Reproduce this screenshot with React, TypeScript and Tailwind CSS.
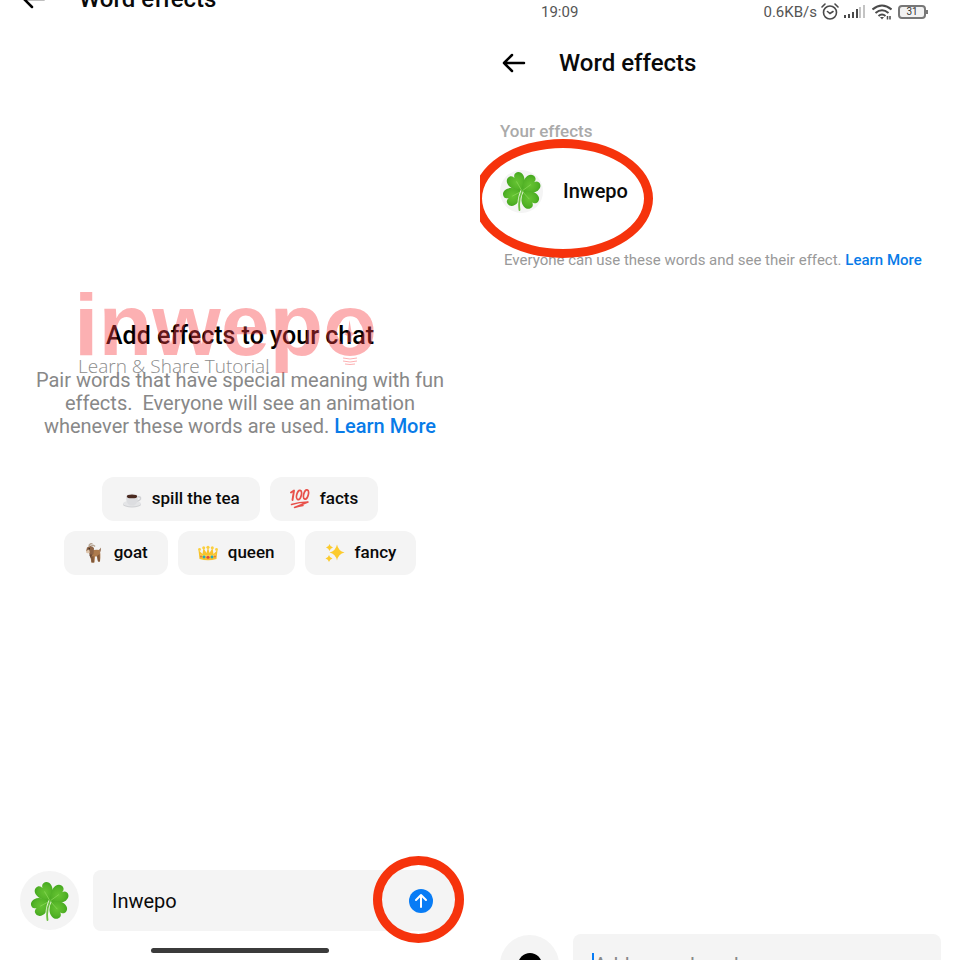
import React from 'react';
import { twJoin } from 'tailwind-merge';

const heart = 'M20 20C16.500 17 11 12.500 11 7C11 3 13.800 .8 16.800 1.300C18.700 1.600 19.800 3.500 20 5C20.200 3.500 21.300 1.600 23.200 1.300C26.200 .8 29 3 29 7C29 12.500 23.500 17 20 20Z';

const Clover = ({ className }: { className: string }) => (
  <svg viewBox="0 0 40 40" className={className} aria-hidden="true">
    <defs>
      <radialGradient id="leaf" cx="50%" cy="45%" r="60%">
        <stop offset="0" stopColor="#66c433" />
        <stop offset="0.600" stopColor="#55b428" />
        <stop offset="1" stopColor="#3fa51c" />
      </radialGradient>
    </defs>
    {[-30, 54, 138, 242].map((angle) => (
      <g key={angle} transform={`rotate(${angle} 20 20)`}>
        <path d={heart} fill="url(#leaf)" />
        <path d="M20 19V9" stroke="#84d452" strokeWidth="0.800" />
      </g>
    ))}
    <path d="M20 20Q16 29 17.500 39" fill="none" stroke="#edf8e6" strokeWidth="3.200" />
    <path d="M20 20Q16 29 17.500 39" fill="none" stroke="#6cbf40" strokeWidth="1.800" strokeLinecap="round" />
  </svg>
);

const Tea = () => (
  <svg viewBox="0 0 20 20" className="size-5" aria-hidden="true">
    <ellipse cx="10" cy="15.500" rx="9" ry="3" fill="#cfd0d3" />
    <ellipse cx="10" cy="14.500" rx="9" ry="3" fill="#e4e5e7" />
    <path d="M15 8Q19 7 18.500 10Q17.500 12 13 12.500" fill="none" stroke="#d0d1d4" strokeWidth="1.500" />
    <path d="M4 7Q4 15 8 16.500H12Q16 15 16 7Z" fill="#dcdde0" />
    <ellipse cx="10" cy="7" rx="6" ry="2.500" fill="#ececee" />
    <ellipse cx="10" cy="7.400" rx="5.200" ry="1.900" fill="#4a2a20" />
  </svg>
);

const Hundred = () => (
  <svg viewBox="0 0 20 20" className="size-5" fill="none" stroke="#e8504a" strokeLinecap="round" strokeLinejoin="round" aria-hidden="true">
    <path d="M1 3.500L4 1.500L2.500 11" strokeWidth="1.900" />
    <ellipse cx="9" cy="6" rx="2.300" ry="4.700" transform="rotate(14 9 6)" strokeWidth="1.700" />
    <ellipse cx="16" cy="5.500" rx="2.300" ry="4.700" transform="rotate(14 16 5.500)" strokeWidth="1.700" />
    <path d="M1.500 15.500Q9 13 18 13L4.500 18.500Q9 17 13 16.500" strokeWidth="1.500" />
  </svg>
);

const Goat = () => (
  <svg viewBox="0 0 20 20" className="size-5" aria-hidden="true">
    <path d="M7 8Q11 6 15.500 7Q17 10 16 18.500H14L13 13.500H11L10.500 19.500H7.500L6 12Z" fill="#ad7b4d" />
    <path d="M13 13L14 18.500H16L15.500 11ZM7 14L7.500 19.500H10L9.500 13Z" fill="#80583a" />
    <path d="M3 4.500L7 2.500L10 5L9.500 11L7 13.500L5 10L2 8.500Z" fill="#8d6345" />
    <path d="M2 8L5 6.500L6 9.500L4 10.500L2 9.500Z" fill="#ddc5ad" />
    <path d="M5 11.500L8 11.500L7 15.500Z" fill="#654633" />
    <path d="M5 3.500Q5 .5 8.500 .5M7 3.500Q9 1 11 3.500" fill="none" stroke="#b7a695" strokeWidth="1.500" />
    <circle cx="5.200" cy="5.800" r=".7" fill="#292019" />
    <path d="M15 7L17 4.500L16.500 9Z" fill="#8d6345" />
  </svg>
);

const Crown = () => (
  <svg viewBox="0 0 20 20" className="size-5" aria-hidden="true">
    <path d="M1.500 16L.5 7L4.500 11L5.500 5L8.500 10L10 4L11.500 10L14.500 5L15.500 11L19.500 7L18.500 16Q10 18.500 1.500 16Z" fill="#f7c22c" />
    <path d="M2 12Q10 14 18 12" stroke="#ffdc55" fill="none" />
    <g fill="#fbcf3d">
      <circle cx="1.500" cy="6.500" r="1.400" />
      <circle cx="5.700" cy="4.800" r="1.500" />
      <circle cx="10" cy="4.300" r="1.600" />
      <circle cx="14.300" cy="4.800" r="1.500" />
      <circle cx="18.500" cy="6.500" r="1.400" />
    </g>
    <circle cx="10" cy="14.200" r="1.500" fill="#df4541" />
    <circle cx="6" cy="14" r="1.400" fill="#25a7bb" />
    <circle cx="14" cy="14" r="1.400" fill="#25a7bb" />
    <circle cx="3" cy="13.500" r=".9" fill="#e0694a" />
    <circle cx="17" cy="13.500" r=".9" fill="#e0694a" />
  </svg>
);

const Sparkles = () => (
  <svg viewBox="0 0 20 20" className="size-5" fill="#fccb2d" aria-hidden="true">
    <path d="M12 1.500Q13.300 8 19.500 9.500Q13.300 11 12 17.500Q10.700 11 4.500 9.500Q10.700 8 12 1.500Z" />
    <path d="M4.500 1Q5.200 4 8 4.500Q5.200 5 4.500 8Q3.800 5 1 4.500Q3.800 4 4.500 1Z" />
    <path d="M4 12Q4.700 15 7.500 15.500Q4.700 16 4 19Q3.300 16 .5 15.500Q3.300 15 4 12Z" />
  </svg>
);

const Header = () => (
  <header className="flex h-14 items-center gap-[31px] pl-5">
    <button aria-label="Back" className="flex size-7 items-center justify-center">
      <svg viewBox="0 0 28 28" className="size-7" fill="none" stroke="#000" strokeWidth="2.5" strokeLinecap="round" strokeLinejoin="round">
        <path d="M24 14H4M12 6L4 14L12 22" />
      </svg>
    </button>
    <h1 className="text-2xl font-medium">Word effects</h1>
  </header>
);

const StatusBar = () => (
  <div className="flex h-6 items-center justify-between pr-8 pl-[61px] text-[15px] text-[#555]">
    <span>19:09</span>
    <div className="flex items-center gap-1">
      <span>0.6KB/s</span>
      <svg viewBox="0 0 18 18" className="size-[18px]" fill="none" stroke="#4a4a4a" strokeWidth="1.6" strokeLinecap="round" aria-hidden="true">
        <circle cx="9" cy="9.500" r="6.500" />
        <path d="M1 4L4 1M17 4L14 1M6.500 8.500L9 10.500L12 8.500" />
      </svg>
      <svg viewBox="0 0 22 14" className="h-[14px] w-[22px]" aria-hidden="true">
        <path d="M1 10H3V13H1ZM5 9H7V13H5ZM9 7H11V13H9ZM13 4H15V13H13Z" fill="#4a4a4a" />
        <path d="M16 2H18V13H16ZM20 0H22V13H20Z" fill="#c4c4c4" />
      </svg>
      <svg viewBox="0 0 20 16" className="ml-[3px] h-4 w-5" fill="none" stroke="#4a4a4a" strokeWidth="2" aria-hidden="true">
        <path d="M.5 5.500Q10-2.500 19.500 5.500M3.500 9Q10 3.500 16.500 9M6.500 12Q10 9 13.500 12" />
        <path d="M8 13L10 15.500L12 13Z" fill="#4a4a4a" stroke="none" />
        <path d="M15.500 12V15.500M18 12V15.500" strokeWidth="1.500" />
      </svg>
      <span className="ml-[2px] flex items-center">
        <span className="flex h-[14px] w-7 items-center justify-center rounded border-2 border-[#777] bg-[#f2f2f2] text-[10px] leading-[10px] text-[#333]">31</span>
        <span className="h-1 w-[2px] bg-[#777]" />
      </span>
    </div>
  </div>
);

const effects = [
  [{ icon: <Tea />, label: 'spill the tea' }, { icon: <Hundred />, label: 'facts' }],
  [{ icon: <Goat />, label: 'goat' }, { icon: <Crown />, label: 'queen' }, { icon: <Sparkles />, label: 'fancy' }],
];

// translucent logo lying over the heading, the last letter doubles as a light bulb
const Watermark = () => (
  <div className="pointer-events-none absolute top-[-41px] left-[-32px] z-10 w-[310px] text-left">
    <svg viewBox="0 0 310 100" className="h-[100px] w-[310px] opacity-40" fill="#fa3c41">
      <mask id="bulb">
        <rect width="310" height="100" fill="white" />
        <circle cx="276" cy="53" r="13" fill="black" />
      </mask>
      <text x="0" y="76" mask="url(#bulb)" className="font-['Liberation_Sans',sans-serif] text-[88px] font-bold">inwepo</text>
      <path d="M275.500 41L277.500 53L281 55L277.500 57V63H273.500V57L270 55L274 53Z" />
      <path d="M269 79Q276 81 283 79M269 82Q276 84 283 82M271 85Q276 86 281 85" fill="none" stroke="#fa3c41" strokeWidth="1" />
    </svg>
    <p className="absolute top-[75px] left-[4px] font-['Open_Sans',sans-serif] text-[19px] leading-6 font-light whitespace-nowrap text-[#8c8c8c]">
      Learn &amp; Share Tutorial
    </p>
  </div>
);

const AddEffects = () => (
  <section className="flex min-h-0 flex-col overflow-hidden">
    <div className="-mt-[29px]">
      <Header />
    </div>
    <div className="flex flex-1 flex-col items-center pt-[293px] text-center">
      <div className="relative">
        <Watermark />
        <h2 className="text-[25px] leading-8 font-medium text-black">Add effects to your chat</h2>
      </div>
      <p className="mt-[17px] text-[20px] leading-[23px] text-[#888]">
        Pair words that have special meaning with fun<br />
        effects.&nbsp; Everyone will see an animation<br />
        whenever these words are used.{' '}
        <a href="#learn" className="font-medium text-[#087be8]">Learn More</a>
      </p>
      <div className="mt-[39px] flex flex-col gap-[10px]">
        {effects.map((row, i) => (
          <div key={i} className="flex justify-center gap-[10px]">
            {row.map(({ icon, label }) => (
              <button key={label} className="flex h-11 items-center gap-[10px] rounded-xl bg-[#f4f4f4] px-5 text-[17px] font-medium">
                {icon}
                {label}
              </button>
            ))}
          </div>
        ))}
      </div>
    </div>
    <div className="flex items-center gap-[14px] pl-5">
      <button aria-label="Choose emoji" className="flex size-[59px] shrink-0 items-center justify-center rounded-full bg-[#f4f4f4]">
        <Clover className="size-10" />
      </button>
      <div className="relative mr-6 flex h-[61px] flex-1 items-center rounded-lg bg-[#f4f4f4] pr-[23px] pl-[19px]">
        <input aria-label="Word or phrase" defaultValue="Inwepo" className="min-w-0 flex-1 bg-transparent text-xl outline-none" />
        <button aria-label="Add" className="flex size-6 items-center justify-center rounded-full bg-[#087cf5]">
          <svg viewBox="0 0 24 24" className="size-6" fill="none" stroke="white" strokeWidth="2" strokeLinecap="round" strokeLinejoin="round">
            <path d="M12 18V6M7 11L12 6L17 11" />
          </svg>
        </button>
        <span className="pointer-events-none absolute top-[-14px] right-[-8px] h-[87px] w-[91px] rounded-[50%] border-[9px] border-[#f6330c]" />
      </div>
    </div>
    <div className="mx-auto mt-[17px] mb-[7px] h-[5px] w-[178px] rounded-full bg-[#3b3b3b]" />
  </section>
);

const YourEffects = () => (
  <section className="relative flex min-h-0 flex-col overflow-hidden">
    <StatusBar />
    <div className="mt-[11px]">
      <Header />
    </div>
    <div className="flex-1 pt-[30px] pl-5">
      <h2 className="text-[17px] leading-5 font-medium text-[#aaa]">Your effects</h2>
      <div className="mt-[26px] flex h-12 items-center gap-5">
        <span className="flex size-[43px] items-center justify-center rounded-full bg-[#f4f4f4]">
          <Clover className="size-10" />
        </span>
        <span className="text-xl font-medium">Inwepo</span>
      </div>
      <p className="mt-[35px] pl-1 text-[15px] leading-5 text-[#999]">
        Everyone can use these words and see their effect.{' '}
        <a href="#learn" className="font-medium text-[#087be8]">Learn More</a>
      </p>
    </div>
    <span className="pointer-events-none absolute top-[139px] left-[-7px] h-[119px] w-[180px] rounded-[50%] border-[9px] border-[#f6330c]" />
    <div className="-mb-[35px] flex items-center gap-[14px] pr-[19px] pl-5">
      <button aria-label="Choose emoji" className="flex size-[59px] shrink-0 items-center justify-center rounded-full bg-[#f4f4f4]">
        <span className="size-6 rounded-full bg-black" />
      </button>
      <div className="flex h-[61px] flex-1 items-center rounded-lg bg-[#f4f4f4] px-[19px]">
        <span className="h-6 w-[2px] bg-[#087cf5]" />
        <input aria-label="Word or phrase" placeholder="Add a word or phrase" className="min-w-0 flex-1 bg-transparent text-xl outline-none placeholder:text-[#888]" />
      </div>
    </div>
  </section>
);

export default function App() {
  return (
    <main className={twJoin('grid h-screen grid-cols-2 overflow-hidden bg-white', "font-['Roboto',sans-serif] text-[#0a0a0a]")}>
      <AddEffects />
      <YourEffects />
    </main>
  );
}
